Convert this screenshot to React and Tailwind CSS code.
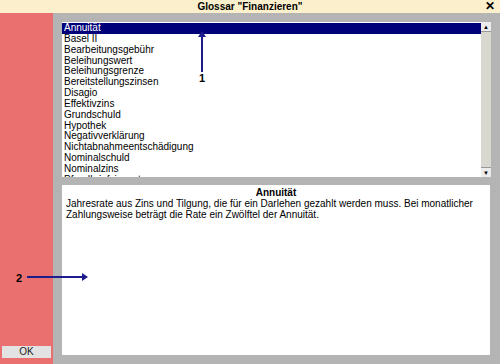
const terms = [
  'Annuität',
  'Basel II',
  'Bearbeitungsgebühr',
  'Beleihungswert',
  'Beleihungsgrenze',
  'Bereitstellungszinsen',
  'Disagio',
  'Effektivzins',
  'Grundschuld',
  'Hypothek',
  'Negativverklärung',
  'Nichtabnahmeentschädigung',
  'Nominalschuld',
  'Nominalzins',
  'Pfandbriefzinssatz',
]

export default function App() {
  return (
    <div className="relative w-[500px] h-[364px] overflow-hidden flex flex-col text-[10px] text-black font-['Liberation_Sans',Arial,sans-serif]">
      {/* title bar */}
      <div className="h-[13px] bg-[#fcf0cc] flex items-center relative">
        <div className="flex-1 text-center font-bold leading-none">Glossar "Finanzieren"</div>
        <span className="absolute right-[5px] top-0 text-[12px] leading-[12px] font-bold">✕</span>
      </div>

      <div className="flex flex-1">
        {/* left strip */}
        <div className="w-[53px] bg-[#ea7070] flex flex-col justify-end pb-[6px] pl-[2px]">
          <button className="w-[49px] h-[12px] bg-[#e2e2e2] text-[10px] leading-none text-[#222]">OK</button>
        </div>

        {/* content */}
        <div className="flex-1 bg-[#b4b4b4] pt-[9px] pl-[9px] pr-[9px] pb-[9px] flex flex-col gap-[8px]">
          <div className="h-[155px] bg-white flex">
            <div className="flex-1 overflow-hidden pt-[1px]">
              {terms.map((t, i) => (
                <div
                  key={t}
                  className={i === 0
                    ? 'h-[10.85px] leading-[10.85px] pl-[2px] bg-[#00007a] text-white'
                    : 'h-[10.85px] leading-[10.85px] pl-[2px]'}
                >
                  {t}
                </div>
              ))}
            </div>
            <div className="w-[10px] bg-[#d8d8d0] flex flex-col justify-between">
              <div className="h-[10px] bg-[#ececec] border-b border-[#999] flex items-center justify-center text-[6px] leading-none">▲</div>
              <div className="h-[10px] bg-[#ececec] border-t border-[#999] flex items-center justify-center text-[6px] leading-none">▼</div>
            </div>
          </div>

          <div className="flex-1 bg-white mr-[1px] px-[4px] pt-[2px]">
            <div className="text-center font-bold leading-[11px]">Annuität</div>
            <p className="leading-[11px]">
              Jahresrate aus Zins und Tilgung, die für ein Darlehen gezahlt werden muss. Bei monatlicher
              Zahlungsweise beträgt die Rate ein Zwölftel der Annuität.
            </p>
          </div>
        </div>
      </div>

      {/* annotation 1 */}
      <div className="absolute left-[201px] top-[33px] w-[2px] h-[39px] bg-[#1c1c8c]" />
      <div className="absolute left-[198px] top-[31px] w-0 h-0 border-l-[4px] border-r-[4px] border-b-[6px] border-l-transparent border-r-transparent border-b-[#1c1c8c]" />
      <div className="absolute left-[199px] top-[70px] font-bold text-[11px]">1</div>

      {/* annotation 2 */}
      <div className="absolute left-[27px] top-[276px] w-[56px] h-[2px] bg-[#1c1c8c]" />
      <div className="absolute left-[82px] top-[273px] w-0 h-0 border-t-[4px] border-b-[4px] border-l-[6px] border-t-transparent border-b-transparent border-l-[#1c1c8c]" />
      <div className="absolute left-[16px] top-[270px] font-bold text-[11px]">2</div>
    </div>
  )
}
